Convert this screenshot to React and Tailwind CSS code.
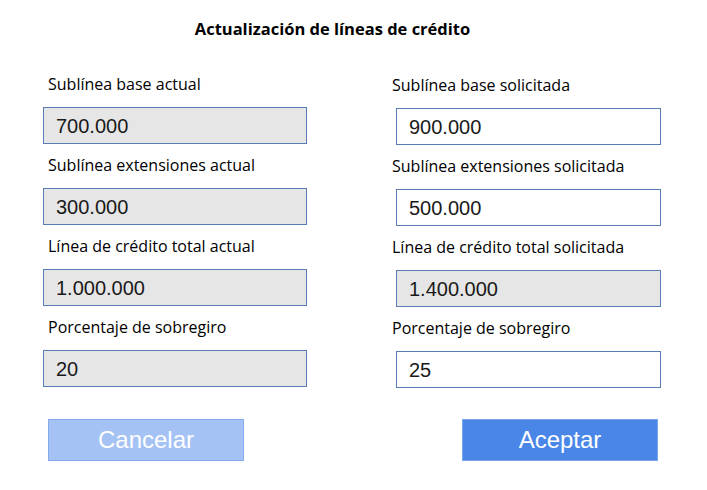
import React, { useState } from 'react';

const Field = ({ label, value, readOnly, right }) => (
  <div className="flex flex-col mb-[11px]">
    <div className={`h-5 leading-5 text-[16px] text-black mb-[13px] ${right ? '-ml-[4px]' : 'pl-[5px]'}`}>
      {label}
    </div>
    <div
      className={`h-[37px] flex items-center px-[12px] border border-[#5b7bb5] text-[20px] text-[#1a1a1a] font-['Liberation_Sans',Arial,sans-serif] ${
        readOnly ? 'bg-[#e6e6e6]' : 'bg-white'
      }`}
    >
      {value}
    </div>
  </div>
);

const App = () => {
  const [left] = useState([
    { label: 'Sublínea base actual', value: '700.000' },
    { label: 'Sublínea extensiones actual', value: '300.000' },
    { label: 'Línea de crédito total actual', value: '1.000.000' },
    { label: 'Porcentaje de sobregiro', value: '20' },
  ]);
  const [right] = useState([
    { label: 'Sublínea base solicitada', value: '900.000', readOnly: false },
    { label: 'Sublínea extensiones solicitada', value: '500.000', readOnly: false },
    { label: 'Línea de crédito total solicitada', value: '1.400.000', readOnly: true },
    { label: 'Porcentaje de sobregiro', value: '25', readOnly: false },
  ]);

  return (
    <div className="w-[707px] h-[490px] bg-white font-['Open_Sans',sans-serif] overflow-hidden">
      <div className="pt-[18px] h-[74px] w-[665px] text-center font-bold text-[16.5px] leading-[22px] text-black">
        Actualización de líneas de crédito
      </div>
      <div className="flex pl-[43px]">
        <div className="w-[264px]">
          {left.map((f) => (
            <Field key={f.label} label={f.label} value={f.value} readOnly />
          ))}
        </div>
        <div className="w-[265px] ml-[89px] mt-px">
          {right.map((f) => (
            <Field key={f.label} label={f.label} value={f.value} readOnly={f.readOnly} right />
          ))}
        </div>
      </div>
      <div className="flex mt-[20px] pl-[48px] font-['Liberation_Sans',Arial,sans-serif]">
        <button className="w-[196px] h-[42px] bg-[#a4c2f4] border border-[#86acf0] text-white text-[24px] leading-none">
          Cancelar
        </button>
        <button className="w-[196px] h-[42px] ml-[218px] bg-[#4a86e8] border border-[#7ba6ee] text-white text-[24px] leading-none">
          Aceptar
        </button>
      </div>
    </div>
  );
};

export default App;
